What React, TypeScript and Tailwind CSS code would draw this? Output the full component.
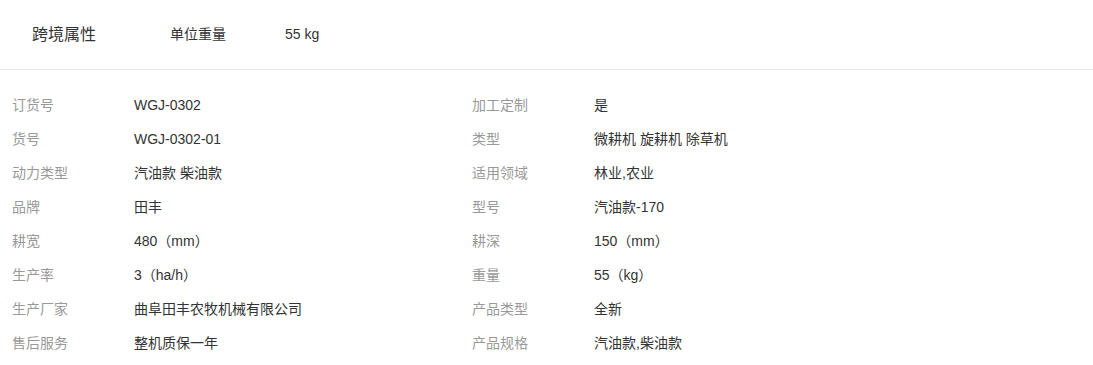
import React from "react";

const rows: [string, string, string, string][] = [
  ["订货号", "WGJ-0302", "加工定制", "是"],
  ["货号", "WGJ-0302-01", "类型", "微耕机 旋耕机 除草机"],
  ["动力类型", "汽油款 柴油款", "适用领域", "林业,农业"],
  ["品牌", "田丰", "型号", "汽油款-170"],
  ["耕宽", "480（mm）", "耕深", "150（mm）"],
  ["生产率", "3（ha/h）", "重量", "55（kg）"],
  ["生产厂家", "曲阜田丰农牧机械有限公司", "产品类型", "全新"],
  ["售后服务", "整机质保一年", "产品规格", "汽油款,柴油款"],
];

export default function App() {
  return (
    <div
      className="w-[1093px] h-[365px] bg-white"
      style={{ fontFamily: '"Liberation Sans", Arial, "Noto Sans CJK SC", sans-serif' }}
    >
      <div className="h-[70px] flex items-center border-b border-[#e6e6e6]">
        <div className="w-[170px] pl-[32px] text-[16px] text-[#333]">跨境属性</div>
        <div className="w-[115px] text-[14px] text-[#333]">单位重量</div>
        <div className="text-[14px] text-[#333]">55 kg</div>
      </div>
      <div className="pt-[18px] flex flex-col">
        {rows.map((r, i) => (
          <div key={i} className="h-[34px] flex items-center text-[14px]">
            <div className="w-[460px] flex items-center">
              <div className="w-[134px] pl-[12px] text-[#999]">{r[0]}</div>
              <div className="text-[#333]">{r[1]}</div>
            </div>
            <div className="flex items-center">
              <div className="w-[134px] pl-[12px] text-[#999]">{r[2]}</div>
              <div className="text-[#333]">{r[3]}</div>
            </div>
          </div>
        ))}
      </div>
    </div>
  );
}
